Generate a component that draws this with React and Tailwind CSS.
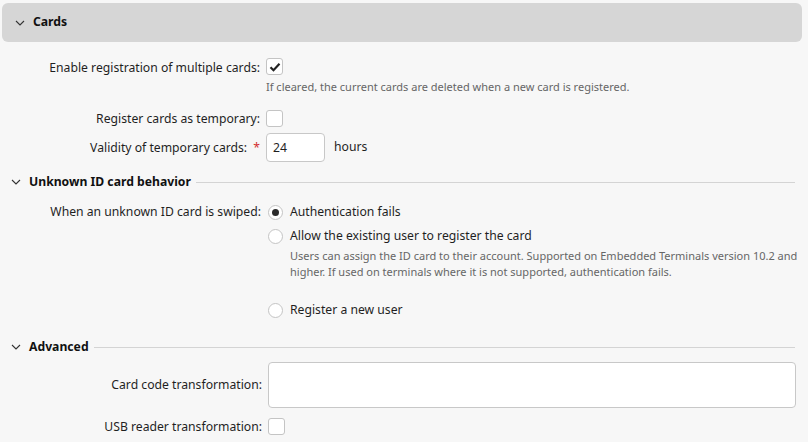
import React from 'react';

const font = { fontFamily: '"Noto Sans", "Open Sans", sans-serif' };

const Chevron = ({ className = '' }) => (
    <svg width="10" height="6" viewBox="0 0 10 6" className={className} fill="none">
        <path d="M1 1l4 4 4-4" stroke="#333" strokeWidth="1.1" />
    </svg>
);

const Checkbox = ({ checked }) => (
    <div className="w-[17px] h-[17px] rounded-[3px] border border-[#c4c4c4] bg-white flex items-center justify-center">
        {checked && (
            <svg width="12" height="10" viewBox="0 0 12 10">
                <path d="M1.5 5.2l3 3 6-6.4" stroke="#222" strokeWidth="2.2" fill="none" />
            </svg>
        )}
    </div>
);

const Radio = ({ checked }) => (
    <div className="w-[15px] h-[15px] rounded-full border border-[#c4c4c4] bg-white flex items-center justify-center shrink-0">
        {checked && <div className="w-[7px] h-[7px] rounded-full bg-[#2b2b2b]" />}
    </div>
);

const SectionTitle = ({ title }) => (
    <div className="flex items-center h-[20px] pl-[11px] pr-[13px]">
        <Chevron />
        <span className="ml-[8px] font-bold text-[12.2px] text-[#111]">{title}</span>
        <div className="flex-1 h-px bg-[#d4d4d4] ml-[5px]" />
    </div>
);

export default function App() {
    return (
        <div className="w-[808px] h-[442px] bg-[#f7f7f7] text-[#1f1f1f] overflow-hidden" style={font}>
            {/* Cards header */}
            <div className="mx-[2px] mt-[3px] w-[800px] h-[39px] bg-[#d6d6d6] rounded-[6px] flex items-center pl-[13px]">
                <Chevron />
                <span className="ml-[8px] font-bold text-[12.2px] text-[#111]">Cards</span>
            </div>

            <div className="grid grid-cols-[260px_1fr] gap-x-[6px] text-[12.2px] mt-[16px]">
                <div className="text-right h-[17px] leading-[17px] mt-[1px]">Enable registration of multiple cards:</div>
                <div>
                    <Checkbox checked />
                    <div className="text-[11px] text-[#666] mt-[4px] leading-[16px]">If cleared, the current cards are deleted when a new card is registered.</div>
                </div>

                <div className="text-right h-[17px] leading-[17px] mt-[15px]">Register cards as temporary:</div>
                <div className="mt-[15px]"><Checkbox /></div>

                <div className="text-right leading-[29px] mt-[6px] h-[29px]">
                    Validity of temporary cards: <span className="text-[#d32f2f] ml-[3px]">*</span>
                </div>
                <div className="mt-[6px] flex items-center">
                    <div className="w-[59px] h-[29px] bg-white border border-[#c8c8c8] rounded-[4px] px-[6px] leading-[27px]">24</div>
                    <span className="ml-[9px]">hours</span>
                </div>
            </div>

            <div className="mt-[10px]">
                <SectionTitle title="Unknown ID card behavior" />
            </div>

            <div className="grid grid-cols-[261px_1fr] gap-x-[7px] text-[12.2px] mt-[11px]">
                <div className="text-right leading-[20px] mt-[-1px]">When an unknown ID card is swiped:</div>
                <div className="flex flex-col">
                    <div className="flex items-center h-[18px]">
                        <Radio checked />
                        <span className="ml-[7px]">Authentication fails</span>
                    </div>
                    <div className="flex items-center h-[18px] mt-[6px]">
                        <Radio />
                        <span className="ml-[7px]">Allow the existing user to register the card</span>
                    </div>
                    <div className="pl-[22px] text-[11px] text-[#666] leading-[16px] mt-[3px] pr-[8px]">
                        Users can assign the ID card to their account. Supported on Embedded Terminals version 10.2 and higher. If used on terminals where it is not supported, authentication fails.
                    </div>
                    <div className="flex items-center h-[18px] mt-[21px]">
                        <Radio />
                        <span className="ml-[7px]">Register a new user</span>
                    </div>
                </div>
            </div>

            <div className="mt-[18px]">
                <SectionTitle title="Advanced" />
            </div>

            <div className="grid grid-cols-[262px_1fr] gap-x-[6px] text-[12.2px] mt-[5px] pr-[12px]">
                <div className="text-right h-[46px] leading-[46px]">Card code transformation:</div>
                <div className="h-[46px] bg-white border border-[#c8c8c8] rounded-[4px]" />

                <div className="text-right h-[18px] leading-[18px] mt-[10px]">USB reader transformation:</div>
                <div className="mt-[10px]"><Checkbox /></div>
            </div>
        </div>
    );
}
